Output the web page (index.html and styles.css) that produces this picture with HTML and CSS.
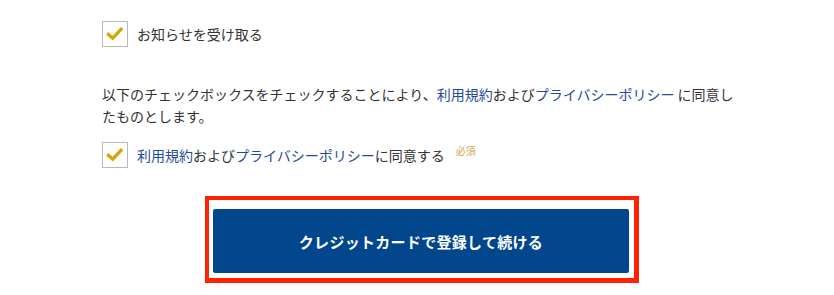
FILE: index.html
```html
<!DOCTYPE html>
<html lang="ja">
<head>
<meta charset="utf-8">
<link rel="stylesheet" href="styles.css">
</head>
<body>
<div class="wrap">
  <label class="check-row first">
    <span class="box"><svg viewBox="0 0 26 26" width="24" height="24"><polyline points="6,13.5 10.5,17.5 19.5,8" fill="none" stroke="#d4a600" stroke-width="3.6" stroke-linecap="square" stroke-linejoin="miter"/></svg></span>
    <span class="label">お知らせを受け取る</span>
  </label>
  <p class="terms">以下のチェックボックスをチェックすることにより、<a href="#">利用規約</a>および<a href="#">プライバシーポリシー</a> に同意したものとします。</p>
  <label class="check-row second">
    <span class="box"><svg viewBox="0 0 26 26" width="24" height="24"><polyline points="6,13.5 10.5,17.5 19.5,8" fill="none" stroke="#d4a600" stroke-width="3.6" stroke-linecap="square" stroke-linejoin="miter"/></svg></span>
    <span class="label"><a href="#">利用規約</a>および<a href="#">プライバシーポリシー</a>に同意する</span>
    <span class="req">必須</span>
  </label>
  <div class="btn-area">
    <div class="highlight">
      <button class="submit">クレジットカードで登録して続ける</button>
    </div>
  </div>
</div>
</body>
</html>
```
FILE: styles.css
```css
html, body {
  margin: 0;
  padding: 0;
  background: #fff;
}
body {
  font-family: "Noto Sans CJK JP", "Noto Sans", sans-serif;
  color: #333;
  font-size: 14px;
}
.wrap {
  width: 640px;
  margin-left: 102px;
  padding-top: 21px;
}
.check-row {
  display: flex;
  align-items: center;
  height: 26px;
}
.box {
  width: 24px;
  height: 24px;
  border: 1px solid #b9b9b9;
  display: flex;
  align-items: center;
  justify-content: center;
  flex: none;
  background: #fff;
}
.box svg { display: block; }
.label {
  margin-left: 9px;
  font-size: 14px;
  line-height: 20px;
}
a {
  color: #1f4a98;
  text-decoration: none;
}
.terms {
  margin: 36px 0 0 0;
  line-height: 22px;
  font-size: 14px;
}
.second {
  margin-top: 15px;
}
.req {
  font-size: 10px;
  color: #d1a549;
  margin-left: 11px;
  align-self: flex-start;
  margin-top: 2px;
  line-height: 14px;
}
.btn-area {
  display: flex;
  justify-content: center;
  margin-top: 28px;
}
.highlight {
  border: 4px solid #ff2200;
  border-right-width: 5px;
  border-bottom-width: 5px;
  padding: 9px 5px 5px 4px;
}
.submit {
  display: block;
  width: 416px;
  height: 64px;
  border: none;
  border-radius: 2px;
  background: #02468c;
  color: #fff;
  font-family: "Noto Sans CJK JP", "Noto Sans", sans-serif;
  font-weight: 700;
  font-size: 15px;
  letter-spacing: 0.3px;
  cursor: pointer;
}
```
